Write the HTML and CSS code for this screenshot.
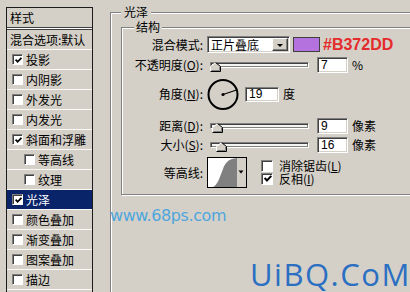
FILE: index.html
```html
<!DOCTYPE html>
<html lang="zh-CN">
<head>
<meta charset="utf-8">
<title>图层样式 - 光泽</title>
<link rel="stylesheet" href="styles.css">
</head>
<body>
<div class="dialog">
  <aside class="styles-list">
    <div class="list-head">样式</div>
    <div class="list-sep"></div>
    <div class="list-item">混合选项:默认</div>
    <div class="list-item"><span class="cb"><svg class="tick" viewBox="0 0 7 7"><path d="M0.6 2.6 L2.6 4.8 L6.4 0.8"/></svg></span>投影</div>
    <div class="list-item"><span class="cb"></span>内阴影</div>
    <div class="list-item"><span class="cb"></span>外发光</div>
    <div class="list-item"><span class="cb"></span>内发光</div>
    <div class="list-item"><span class="cb"><svg class="tick" viewBox="0 0 7 7"><path d="M0.6 2.6 L2.6 4.8 L6.4 0.8"/></svg></span>斜面和浮雕</div>
    <div class="list-item sub"><span class="cb"></span>等高线</div>
    <div class="list-item sub"><span class="cb"></span>纹理</div>
    <div class="list-item selected"><span class="cb"><svg class="tick" viewBox="0 0 7 7"><path d="M0.6 2.6 L2.6 4.8 L6.4 0.8"/></svg></span>光泽</div>
    <div class="list-item"><span class="cb"></span>颜色叠加</div>
    <div class="list-item"><span class="cb"></span>渐变叠加</div>
    <div class="list-item"><span class="cb"></span>图案叠加</div>
    <div class="list-item"><span class="cb"></span>描边</div>
  </aside>

  <main class="panel">
    <fieldset class="group outer">
      <legend>光泽</legend>
      <fieldset class="group inner">
        <legend>结构</legend>

        <div class="row row-blend">
          <span class="label">混合模式:</span>
          <div class="select"><span class="select-text">正片叠底</span><span class="drop-btn"><span class="arrow"></span></span></div>
          <span class="swatch"></span>
          <span class="hex">#B372DD</span>
        </div>

        <div class="row row-opacity">
          <span class="label">不透明度(<u>O</u>):</span>
          <div class="slider">
            <div class="track"></div>
            <svg class="thumb" style="left:3px" viewBox="0 0 11 10"><path d="M0.5 9.5 V4.5 L5.5 0.5 L10.5 4.5 V9.5 Z" fill="#d4d0c8"/><path d="M0.5 9.5 V4.5 L5.5 0.5" fill="none" stroke="#fff"/><path d="M5.5 0.5 L10.5 4.5 V9.5 H0.5" fill="none" stroke="#000"/><path d="M9.5 5 V8.5 H1.5" fill="none" stroke="#808080"/></svg>
          </div>
          <span class="field">7</span>
          <span class="unit">%</span>
        </div>

        <div class="row row-angle">
          <span class="label">角度(<u>N</u>):</span>
          <svg class="dial" viewBox="0 0 32 32"><circle cx="16" cy="16.5" r="14.5" fill="none" stroke="#000" stroke-width="2"/><line x1="16" y1="16.5" x2="29.5" y2="12" stroke="#000" stroke-width="1.2"/><circle cx="16" cy="16.5" r="1.6" fill="#000"/></svg>
          <span class="field field-angle">19</span>
          <span class="unit">度</span>
        </div>

        <div class="row row-distance">
          <span class="label">距离(<u>D</u>):</span>
          <div class="slider">
            <div class="track"></div>
            <svg class="thumb" style="left:5px" viewBox="0 0 11 10"><path d="M0.5 9.5 V4.5 L5.5 0.5 L10.5 4.5 V9.5 Z" fill="#d4d0c8"/><path d="M0.5 9.5 V4.5 L5.5 0.5" fill="none" stroke="#fff"/><path d="M5.5 0.5 L10.5 4.5 V9.5 H0.5" fill="none" stroke="#000"/><path d="M9.5 5 V8.5 H1.5" fill="none" stroke="#808080"/></svg>
          </div>
          <span class="field">9</span>
          <span class="unit">像素</span>
        </div>

        <div class="row row-size">
          <span class="label">大小(<u>S</u>):</span>
          <div class="slider">
            <div class="track"></div>
            <svg class="thumb" style="left:9px" viewBox="0 0 11 10"><path d="M0.5 9.5 V4.5 L5.5 0.5 L10.5 4.5 V9.5 Z" fill="#d4d0c8"/><path d="M0.5 9.5 V4.5 L5.5 0.5" fill="none" stroke="#fff"/><path d="M5.5 0.5 L10.5 4.5 V9.5 H0.5" fill="none" stroke="#000"/><path d="M9.5 5 V8.5 H1.5" fill="none" stroke="#808080"/></svg>
          </div>
          <span class="field">16</span>
          <span class="unit">像素</span>
        </div>

        <div class="row row-contour">
          <span class="label">等高线:</span>
          <svg class="contour" viewBox="0 0 40 31"><rect x="0" y="0" width="40" height="31" fill="#000"/><rect x="1" y="1" width="38" height="29" fill="#fff"/><path d="M6 30 C11 28 13 19 16 12 C18 6 21 2 30 1 L30 30 Z" fill="#808080"/><rect x="30" y="1" width="9" height="29" fill="#d4d0c8"/><path d="M31.5 13.5 H36.5 L34 16.5 Z" fill="#000"/></svg>
          <div class="checks">
            <label class="check-item"><span class="cb big"></span>消除锯齿(<u>L</u>)</label>
            <label class="check-item"><span class="cb big"><svg class="tick big-tick" viewBox="0 0 7 7"><path d="M0.6 2.6 L2.6 4.8 L6.4 0.8"/></svg></span>反相(<u>I</u>)</label>
          </div>
        </div>
      </fieldset>
    </fieldset>
  </main>

  <div class="wm wm-68">www.68ps.com</div>
  <div class="wm wm-uibq">UiBQ.CoM</div>
</div>
</body>
</html>
```
FILE: styles.css
```css
html, body {
  margin: 0;
  padding: 0;
  overflow: hidden;
}

body {
  background: #d4d0c8;
  color: #000;
  font-family: "Noto Sans CJK SC", "Noto Sans", sans-serif;
  font-size: 12px;
  line-height: 14px;
}

u {
  text-decoration: underline;
  text-underline-offset: 1px;
}

.dialog {
  position: relative;
  display: flex;
  align-items: flex-start;
  width: 410px;
  height: 292px;
  overflow: hidden;
}

/* ---------- left style list ---------- */
.styles-list {
  flex: none;
  margin: 7px 0 0 6px;
  width: 87px;
  height: 300px;
  box-sizing: border-box;
  border: 1px solid #1c1c1c;
}

.list-head {
  height: 19px;
  padding-left: 3px;
  display: flex;
  align-items: center;
}

.list-sep {
  height: 1px;
  border-top: 1px solid #404040;
  border-bottom: 1px solid #404040;
  background: #fff;
}

.list-item {
  height: 19px;
  border-bottom: 1px solid #fbfaf7;
  display: flex;
  align-items: center;
  padding-left: 3px;
  white-space: nowrap;
}

.list-item .cb {
  margin: 0 3px 0 2px;
}

.list-item.sub {
  padding-left: 15px;
}

.list-item.selected {
  background: #0a246a;
  color: #fff;
}

.cb {
  display: inline-flex;
  align-items: center;
  justify-content: center;
  flex: none;
  width: 11px;
  height: 11px;
  box-sizing: border-box;
  border: 1px solid;
  border-color: #808080 #fff #fff #808080;
  box-shadow: inset 1px 1px #404040;
  background: #fff;
}

.cb.big {
  width: 12px;
  height: 12px;
  margin-right: 6px;
}

.tick {
  width: 7px;
  height: 7px;
  margin: 1px 0 0 1px;
}

.tick path {
  fill: none;
  stroke: #000;
  stroke-width: 1.7;
}

.big-tick {
  width: 8px;
  height: 8px;
}

/* ---------- right panel ---------- */
.panel {
  flex: none;
  margin-left: 17px;
  padding-top: 5px;
  width: 340px;
}

.group {
  margin: 0;
  min-width: 0;
  border: 1px solid #808080;
  box-shadow: inset 1px 1px #fff, 1px 1px #fff;
}

.group > legend {
  line-height: 14px;
  background: #d4d0c8;
}

.outer {
  padding: 1px 0 0 10px;
  height: 330px;
  box-sizing: border-box;
}

.outer > legend {
  padding: 0 3px;
}

.inner {
  padding: 2px 0 6px 12px;
  width: 330px;
}

.inner > legend {
  padding: 0 2px;
}

.row {
  display: flex;
  align-items: center;
  white-space: nowrap;
}

.row-blend { height: 17px; }
.row-opacity { height: 16px; margin-top: 4px; }
.row-angle { height: 32px; margin-top: 5px; }
.row-distance { height: 16px; margin-top: 8px; }
.row-size { height: 16px; margin-top: 3px; }
.row-contour { height: 31px; margin-top: 4px; align-items: flex-start; }

.row-contour .label {
  align-self: center;
}

.label {
  flex: none;
  width: 69px;
  margin-right: 4px;
  text-align: right;
}

/* select */
.select {
  flex: none;
  display: flex;
  align-items: center;
  width: 83px;
  height: 17px;
  box-sizing: border-box;
  border: 1px solid;
  border-color: #808080 #fff #fff #808080;
  box-shadow: inset 1px 1px #404040, inset -1px -1px #d4d0c8;
  background: #fff;
  padding: 0 1px 0 3px;
  margin-right: 3px;
}

.select-text {
  flex: 1;
}

.drop-btn {
  display: flex;
  align-items: center;
  justify-content: center;
  width: 16px;
  height: 13px;
  box-sizing: border-box;
  background: #d4d0c8;
  border: 1px solid;
  border-color: #fff #404040 #404040 #fff;
  box-shadow: inset -1px -1px #808080;
}

.arrow {
  width: 0;
  height: 0;
  border-left: 3px solid transparent;
  border-right: 3px solid transparent;
  border-top: 3px solid #000;
  margin-top: 1px;
}

.swatch {
  flex: none;
  width: 27px;
  height: 15px;
  box-sizing: border-box;
  border: 1px solid #404040;
  background: #b372dd;
  margin-right: 3px;
}

.hex {
  font-family: "Liberation Sans", Arial, sans-serif;
  font-weight: bold;
  font-size: 16px;
  line-height: 17px;
  color: #e42b2b;
}

/* slider */
.slider {
  position: relative;
  flex: none;
  align-self: stretch;
  width: 110px;
}

.track {
  margin: 5px 0 0 3px;
  width: 99px;
  height: 6px;
  box-sizing: border-box;
  border: 1px solid;
  border-color: #808080 #fff #fff #808080;
  box-shadow: inset 1px 1px #404040, inset -1px -1px #808080;
  background: #f4f4f0;
}

.thumb {
  position: absolute;
  top: 5px;
  width: 11px;
  height: 10px;
}

/* text fields */
.field {
  flex: none;
  width: 31px;
  height: 16px;
  box-sizing: border-box;
  border: 1px solid;
  border-color: #808080 #fff #fff #808080;
  box-shadow: inset 1px 1px #404040, inset -1px -1px #d4d0c8;
  background: #fff;
  padding-left: 3px;
  line-height: 14px;
  font-family: "Liberation Sans", Arial, sans-serif;
}

.field-angle {
  width: 34px;
  height: 15px;
  line-height: 13px;
  margin-left: 6px;
}

.unit {
  margin-left: 4px;
}

.dial {
  flex: none;
  width: 32px;
  height: 32px;
}

.contour {
  flex: none;
  width: 40px;
  height: 31px;
}

.checks {
  display: flex;
  flex-direction: column;
  margin: 2px 0 0 14px;
}

.check-item {
  display: flex;
  align-items: center;
  height: 13px;
  line-height: 13px;
}

/* watermarks */
.wm {
  position: absolute;
  white-space: nowrap;
}

.wm-68 {
  left: 110px;
  top: 208px;
  font-family: "DejaVu Sans", sans-serif;
  font-size: 16px;
  line-height: 16px;
  letter-spacing: -0.4px;
  color: #4ea6de;
}

.wm-uibq {
  left: 250px;
  top: 259px;
  font-family: "Open Sans", sans-serif;
  font-size: 31px;
  line-height: 31px;
  letter-spacing: 1.5px;
  color: #2b6fc2;
}
```
